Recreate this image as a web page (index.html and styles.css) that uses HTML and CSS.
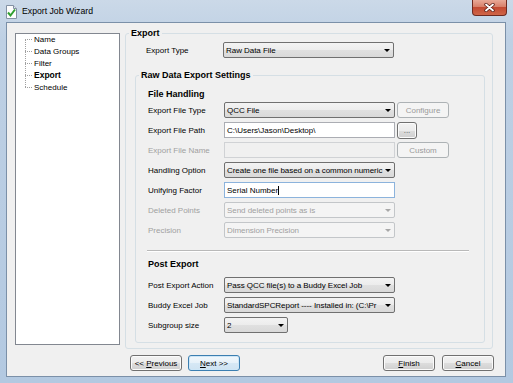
FILE: index.html
```html
<!DOCTYPE html>
<html lang="en">
<head>
    <meta charset="UTF-8">
    <meta name="viewport" content="width=device-width, initial-scale=1.0">
    <title>Export Job Wizard</title>
    <link rel="stylesheet" href="styles.css">
</head>
<body>
    <div class="window">
        <div class="titlebar">
            <svg class="app-icon" width="13" height="14" viewBox="0 0 13 14">
                <path d="M1.5 0.5 H8.5 L11.5 3.5 V13.5 H1.5 Z" fill="#fdfdfd" stroke="#8391a3"/>
                <path d="M8.5 0.5 V3.5 H11.5" fill="#dde4ec" stroke="#8391a3"/>
                <path d="M3 7.5 L5.5 10.5 L10 4.5" fill="none" stroke="#2f9e2f" stroke-width="2"/>
            </svg>
            <span class="title">Export Job Wizard</span>
            <div class="close-btn">
                <svg width="11" height="9" viewBox="0 0 11 9">
                    <path d="M2 1.5 L9 7.5 M9 1.5 L2 7.5" stroke="#5a1f17" stroke-width="3.4" stroke-linecap="round"/>
                    <path d="M2 1.5 L9 7.5 M9 1.5 L2 7.5" stroke="#ffffff" stroke-width="1.8" stroke-linecap="round"/>
                </svg>
            </div>
        </div>

        <div class="client">
            <div class="content">
                <div class="tree">
                    <ul class="tree-list">
                        <li>Name</li>
                        <li>Data Groups</li>
                        <li>Filter</li>
                        <li class="current">Export</li>
                        <li>Schedule</li>
                    </ul>
                </div>

                <div class="group export-group">
                    <div class="group-title">Export</div>
                    <div class="row top-row">
                        <span class="lbl">Export Type</span>
                        <div class="combo"><span class="val">Raw Data File</span><span class="arrow"></span></div>
                    </div>

                    <div class="group settings-group">
                        <div class="group-title">Raw Data Export Settings</div>

                        <div class="section-title">File Handling</div>
                        <div class="row first">
                            <span class="lbl">Export File Type</span>
                            <div class="combo"><span class="val">QCC File</span><span class="arrow"></span></div>
                            <button class="btn side" disabled>Configure</button>
                        </div>
                        <div class="row">
                            <span class="lbl">Export File Path</span>
                            <div class="field">C:\Users\Jason\Desktop\</div>
                            <button class="btn side dots">...</button>
                        </div>
                        <div class="row">
                            <span class="lbl off">Export File Name</span>
                            <div class="field off"></div>
                            <button class="btn side" disabled>Custom</button>
                        </div>
                        <div class="row">
                            <span class="lbl">Handling Option</span>
                            <div class="combo"><span class="val">Create one file based on a common numeric</span><span class="arrow"></span></div>
                        </div>
                        <div class="row">
                            <span class="lbl">Unifying Factor</span>
                            <div class="field focus">Serial Number<span class="caret"></span></div>
                        </div>
                        <div class="row">
                            <span class="lbl off">Deleted Points</span>
                            <div class="combo off"><span class="val">Send deleted points as is</span><span class="arrow"></span></div>
                        </div>
                        <div class="row">
                            <span class="lbl off">Precision</span>
                            <div class="combo off"><span class="val">Dimension Precision</span><span class="arrow"></span></div>
                        </div>

                        <div class="separator"></div>

                        <div class="section-title post">Post Export</div>
                        <div class="row first-post">
                            <span class="lbl">Post Export Action</span>
                            <div class="combo"><span class="val">Pass QCC file(s) to a Buddy Excel Job</span><span class="arrow"></span></div>
                        </div>
                        <div class="row">
                            <span class="lbl">Buddy Excel Job</span>
                            <div class="combo"><span class="val">StandardSPCReport ---- Installed in: (C:\Pr</span><span class="arrow"></span></div>
                        </div>
                        <div class="row">
                            <span class="lbl">Subgroup size</span>
                            <div class="combo small"><span class="val">2</span><span class="arrow"></span></div>
                        </div>
                    </div>
                </div>
            </div>

            <div class="footer">
                <div class="btn-group nav">
                    <button class="btn">&lt;&lt; <u>P</u>revious</button>
                    <button class="btn default"><u>N</u>ext &gt;&gt;</button>
                </div>
                <div class="btn-group end">
                    <button class="btn"><u>F</u>inish</button>
                    <button class="btn"><u>C</u>ancel</button>
                </div>
            </div>
        </div>
    </div>
</body>
</html>
```

FILE: styles.css
```css
* {
    box-sizing: border-box;
}
body {
    margin: 0;
    width: 513px;
    height: 383px;
    overflow: hidden;
    font-family: "Liberation Sans", Arial, sans-serif;
    font-size: 8px;
    color: #000;
    background-color: #b9cde3;
}
.window {
    height: 383px;
    display: flex;
    flex-direction: column;
    background: linear-gradient(to bottom, #cbd9e8, #bed0e4 40px, #b3c9e1);
}

/* title bar */
.titlebar {
    height: 22px;
    display: flex;
    align-items: flex-start;
}
.app-icon {
    margin: 5px 0 0 5px;
}
.title {
    margin: 6px 0 0 4px;
    font-size: 8.7px;
    line-height: 10px;
}
.close-btn {
    margin-left: auto;
    margin-right: 6px;
    width: 35px;
    height: 16px;
    border: 1px solid #6e2a20;
    border-top: none;
    border-radius: 0 0 4px 4px;
    background: linear-gradient(to bottom, #e9a997, #d8806a 45%, #c34a32 50%, #cf6548);
    display: flex;
    align-items: center;
    justify-content: center;
}

/* client area */
.client {
    flex: 1;
    margin: 0 7px 6px 6px;
    border: 1px solid #7b90a8;
    background-color: #f0f0f0;
    display: flex;
    flex-direction: column;
}
.content {
    display: flex;
    align-items: flex-start;
    padding: 10px 0 0 8px;
}

/* step tree */
.tree {
    width: 105px;
    height: 312px;
    background-color: #fff;
    border: 1px solid #828790;
}
.tree-list {
    list-style: none;
    margin: -1px 0 0 0;
    padding: 0;
    position: relative;
}
.tree-list::before {
    content: '';
    position: absolute;
    left: 9px;
    top: 6px;
    bottom: 6px;
    border-left: 1px dotted #a0a0a0;
}
.tree-list li {
    height: 12px;
    display: flex;
    align-items: center;
}
.tree-list li::before {
    content: '';
    width: 7px;
    margin: 0 2px 0 9px;
    border-top: 1px dotted #a0a0a0;
}
.tree-list .current {
    font-weight: bold;
    font-size: 8.5px;
}

/* group boxes */
.group {
    border: 1px solid #d5dfe5;
    border-radius: 3px;
}
.group-title {
    width: fit-content;
    margin: -6px 0 0 3px;
    padding: 0 2px;
    background-color: #f0f0f0;
    font-weight: bold;
    font-size: 9px;
    line-height: 10px;
}
.export-group {
    margin-left: 5px;
    width: 368px;
    padding-bottom: 5px;
}
.settings-group {
    margin: 17px 0 0 9px;
    width: 350px;
    padding-bottom: 9px;
}
.section-title {
    margin: 9px 0 0 12px;
    font-weight: bold;
    font-size: 9px;
    line-height: 10px;
}
.section-title.post {
    margin-top: 7px;
}
.separator {
    margin: 12px 0 0 11px;
    width: 322px;
    border-top: 1px solid #b9b9b9;
    border-bottom: 1px solid #fff;
}

/* rows */
.row {
    display: flex;
    align-items: center;
    height: 16px;
    margin-top: 4px;
    padding-left: 12px;
}
.row.first {
    margin-top: 3px;
}
.row.first-post {
    margin-top: 8px;
}
.top-row {
    padding-left: 20px;
}
.top-row .lbl {
    width: 77px;
}
.lbl {
    width: 76px;
    flex-shrink: 0;
    white-space: nowrap;
}
.lbl.off {
    color: #a0a0a0;
}

/* combo boxes */
.combo {
    width: 171px;
    height: 16px;
    border: 1px solid #707070;
    border-radius: 2px;
    background: linear-gradient(to bottom, #f3f3f3, #ececec 50%, #e0e0e0 51%, #d9d9d9);
    display: flex;
    align-items: center;
    padding-left: 2px;
}
.combo .val {
    flex: 1;
    white-space: nowrap;
    overflow: hidden;
    letter-spacing: -0.05px;
}
.combo .arrow {
    flex-shrink: 0;
    width: 0;
    height: 0;
    border-left: 3px solid transparent;
    border-right: 3px solid transparent;
    border-top: 3px solid #000;
    margin: 0 3px 0 1px;
}
.combo.off {
    border-color: #c3c6c9;
    background: #f4f4f4;
    color: #a0a0a0;
}
.combo.off .arrow {
    border-top-color: #a8a8a8;
}
.combo.small {
    width: 64px;
}

/* text fields */
.field {
    width: 171px;
    height: 16px;
    border: 1px solid #abadb3;
    background-color: #fff;
    display: flex;
    align-items: center;
    padding-left: 2px;
    white-space: nowrap;
}
.field.off {
    background-color: #f0f0f0;
    border-color: #d0d2d5;
}
.field.focus {
    border-color: #8cb3dc;
}
.caret {
    display: inline-block;
    width: 1px;
    height: 9px;
    background-color: #000;
}

/* buttons */
.btn {
    width: 52px;
    height: 16px;
    padding: 0;
    border: 1px solid #707070;
    border-radius: 3px;
    background: linear-gradient(to bottom, #f2f2f2, #ebebeb 50%, #dddddd 51%, #cfcfcf);
    box-shadow: inset 0 0 0 1px #fbfbfb;
    font-family: "Liberation Sans", Arial, sans-serif;
    font-size: 8px;
    color: #000;
}
.btn:disabled {
    border-color: #adb2b5;
    background: #f4f4f4;
    box-shadow: none;
    color: #9a9a9a;
}
.btn.default {
    border-color: #3c7fb1;
    background: linear-gradient(to bottom, #f2f8fc, #e6f1f9 50%, #d6e8f5 51%, #cfe3f2);
    box-shadow: inset 0 0 0 1px #cde6f7;
}
.btn.side {
    margin-left: 2px;
}
.btn.dots {
    width: 20px;
    height: 17px;
    color: #555;
}
.footer {
    margin-top: auto;
    display: flex;
    justify-content: space-between;
    padding: 0 11px 5px 123px;
}
.btn-group {
    display: flex;
}
.nav {
    gap: 6px;
}
.end {
    gap: 7px;
}
```
